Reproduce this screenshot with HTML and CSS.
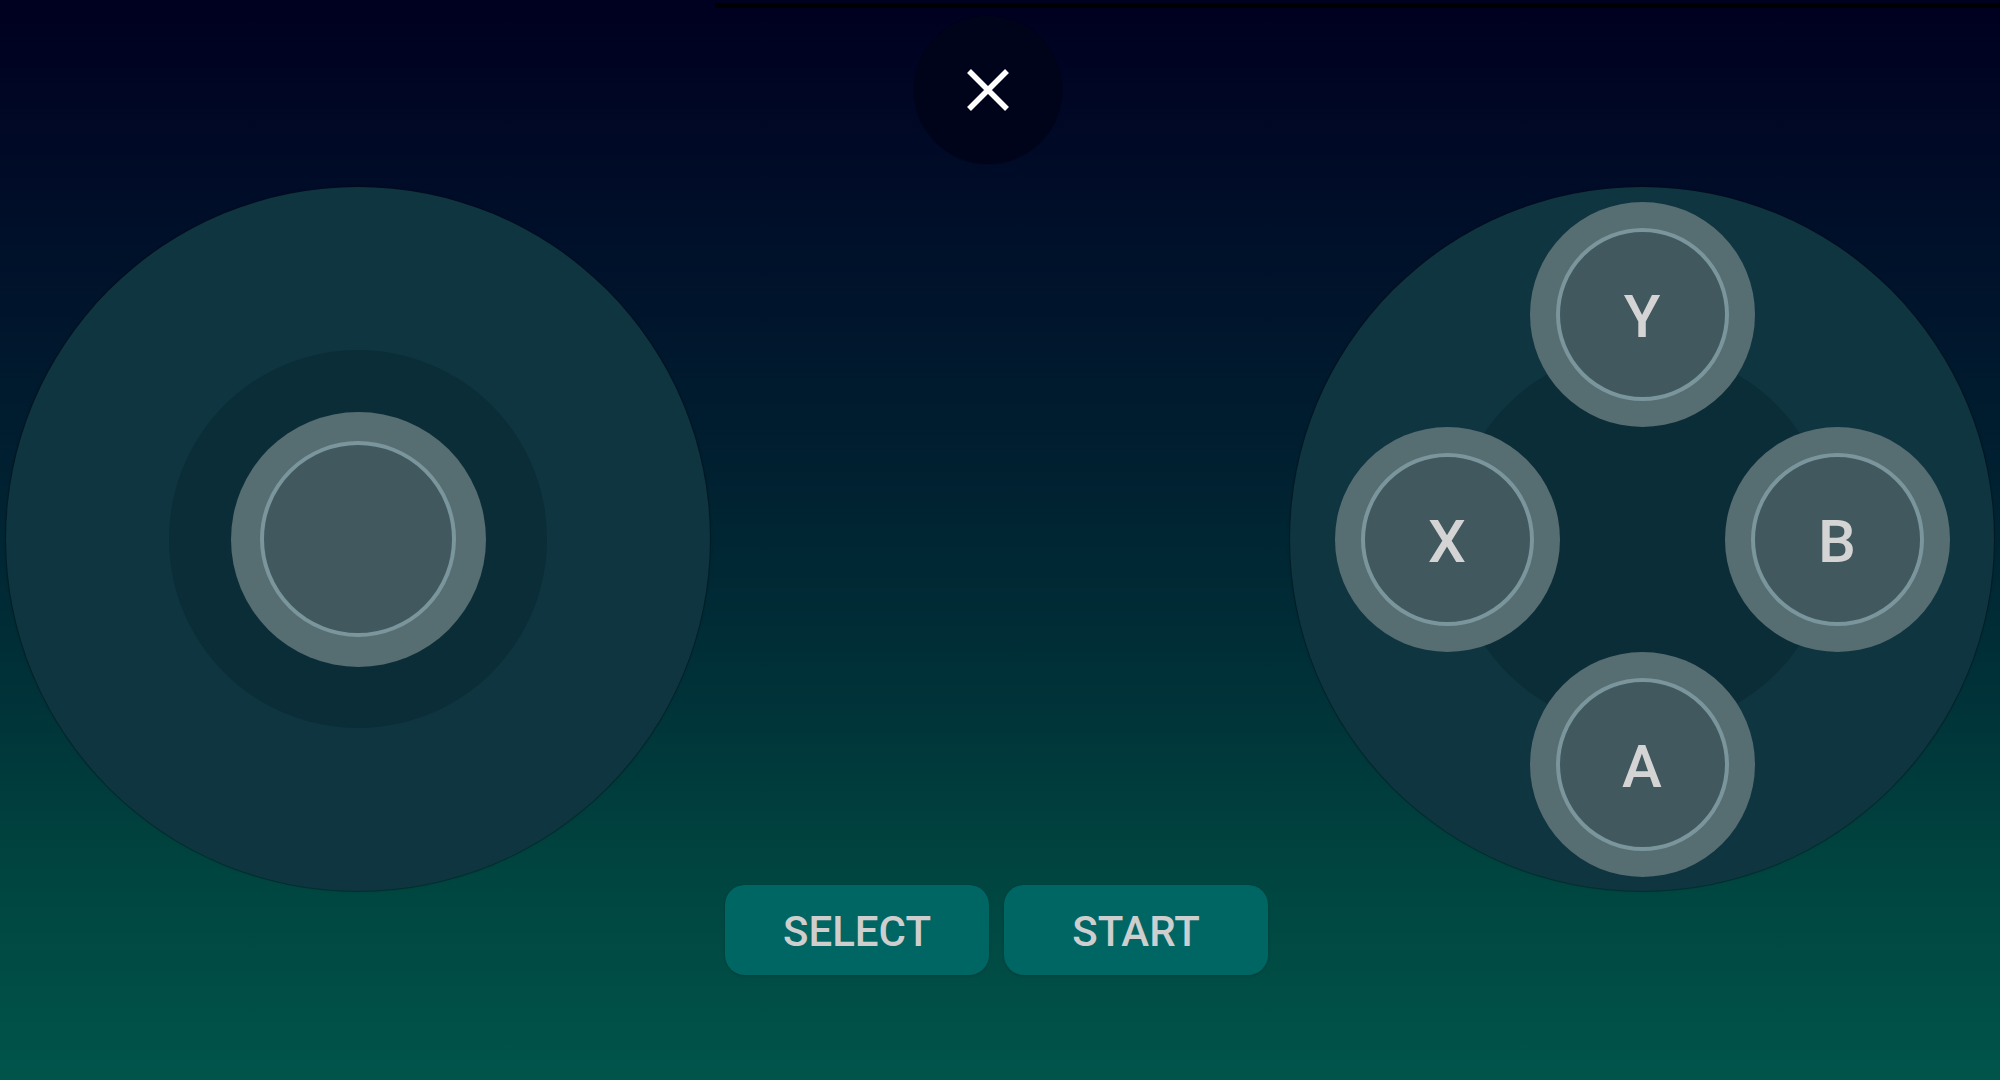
FILE: index.html
```html
<!DOCTYPE html>
<html lang="en">
<head>
<meta charset="utf-8">
<title>Gamepad</title>
<link rel="stylesheet" href="styles.css">
</head>
<body>
<div class="screen">
  <div class="topline"></div>
  <div class="main">
    <div class="pad">
      <div class="stick-base">
        <div class="knob"><div class="knob-face"></div></div>
      </div>
    </div>
    <div class="center">
      <button class="close" aria-label="Close">
        <svg width="42" height="42" viewBox="0 0 42 42"><path d="M2 2 L40 40 M40 2 L2 40" stroke="#ffffff" stroke-width="5.5" stroke-linecap="butt" fill="none"/></svg>
      </button>
      <div class="sysbtns">
        <button class="sys">SELECT</button>
        <button class="sys">START</button>
      </div>
    </div>
    <div class="pad">
      <div class="face-grid">
        <div class="face-base"></div>
        <div class="face y"><span>Y</span></div>
        <div class="face x"><span>X</span></div>
        <div class="face b"><span>B</span></div>
        <div class="face a"><span>A</span></div>
      </div>
    </div>
  </div>
</div>
</body>
</html>
```
FILE: styles.css
```css
* { box-sizing: border-box; }
html, body { margin: 0; padding: 0; }
body {
  width: 2000px;
  height: 1080px;
  overflow: hidden;
  font-family: Roboto, "Liberation Sans", sans-serif;
}
.screen {
  width: 2000px;
  height: 1080px;
  background: linear-gradient(180deg, #000020 0%, #00102a 22%, #001f30 42%, #003038 62%, #00443f 80%, #00554b 100%);
  display: flex;
  flex-direction: column;
}
.topline {
  margin-top: 3px;
  margin-left: 715px;
  height: 5px;
  background: #000000;
  flex: none;
}
.main {
  display: flex;
  padding-left: 6px;
  flex: 1;
}
.pad {
  width: 704px;
  height: 704px;
  margin-top: 179px;
  border-radius: 50%;
  background: #0e3540;
  box-shadow: 0 0 0 1px rgba(0, 10, 15, 0.3), 0 0 3px rgba(0, 0, 0, 0.2);
  display: grid;
  place-items: center;
  flex: none;
}
.stick-base {
  width: 378px;
  height: 378px;
  border-radius: 50%;
  background: #0b2d37;
  display: grid;
  place-items: center;
}
.knob {
  width: 255px;
  height: 255px;
  border-radius: 50%;
  background: #566d72;
  display: grid;
  place-items: center;
}
.knob-face {
  width: 196px;
  height: 196px;
  border-radius: 50%;
  background: #40585e;
  border: 4px solid #7a959c;
}
.center {
  width: 580px;
  display: flex;
  flex-direction: column;
  padding-top: 8px;
  flex: none;
}
.close {
  width: 148px;
  height: 148px;
  margin-left: 204px;
  border-radius: 50%;
  border: none;
  padding: 0;
  background: #00041a;
  box-shadow: 0 0 0 1px rgba(0, 0, 0, 0.15);
  display: grid;
  place-items: center;
}
.close svg { display: block; }
.sysbtns {
  margin-top: 721px;
  padding-left: 15px;
  display: flex;
  gap: 15px;
}
.sys {
  width: 264px;
  height: 90px;
  border: none;
  border-radius: 20px;
  background: #006663;
  color: #cecece;
  font-family: Roboto, "Liberation Sans", sans-serif;
  font-weight: 500;
  font-size: 42px;
  padding: 2px 0 0;
  box-shadow: 0 1px 3px rgba(0, 0, 0, 0.2);
}
.face-grid {
  display: grid;
  grid-template-columns: 195px 195px 195px;
  grid-template-rows: 225px 225px 225px;
}
.face-base {
  grid-area: 1 / 1 / 4 / 4;
  place-self: center;
  width: 380px;
  height: 380px;
  border-radius: 50%;
  background: #0b2d37;
}
.face {
  width: 225px;
  height: 225px;
  margin: 0 -15px;
  border-radius: 50%;
  background: #566d72;
  display: grid;
  place-items: center;
}
.face span {
  width: 173px;
  height: 173px;
  border-radius: 50%;
  background: #40585e;
  border: 4px solid #7a959c;
  display: grid;
  place-items: center;
  padding-top: 5px;
  color: #d4d4d4;
  font-weight: 500;
  font-size: 60px;
  line-height: 1;
}
.face.y { grid-area: 1 / 2; }
.face.x { grid-area: 2 / 1; }
.face.b { grid-area: 2 / 3; }
.face.a { grid-area: 3 / 2; }
```
